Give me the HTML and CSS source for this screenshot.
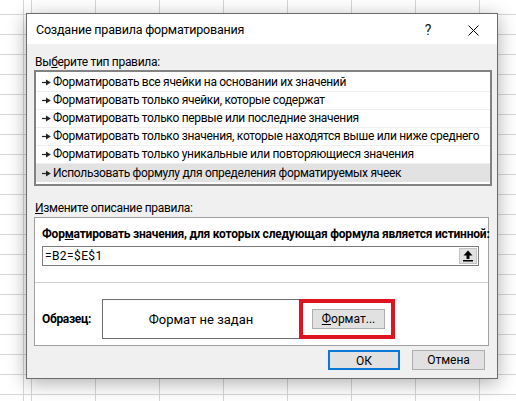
FILE: index.html
```html
<!DOCTYPE html>
<html lang="ru">
<head>
<meta charset="utf-8">
<title>Создание правила форматирования</title>
<link rel="stylesheet" href="styles.css">
</head>
<body>
<div class="dialog">
  <div class="titlebar">
    <span class="title">Создание правила форматирования</span>
    <span class="help">?</span>
    <span class="close"><svg width="11" height="11" viewBox="0 0 11 11"><path d="M0.5 0.5 L10.5 10.5 M10.5 0.5 L0.5 10.5" stroke="#000" stroke-width="1" fill="none"/></svg></span>
  </div>
  <div class="content">
    <div class="label">Вы<u>б</u>ерите тип правила:</div>
    <ul class="rules">
      <li><svg class="arrow" width="9" height="7" viewBox="0 0 9 7"><path d="M0 3.5 H4.5" stroke="#222" stroke-width="1.2"/><path d="M4 0.5 L8.8 3.5 L4 6.5 Z" fill="#222"/></svg>Форматировать все ячейки на основании их значений</li>
      <li><svg class="arrow" width="9" height="7" viewBox="0 0 9 7"><path d="M0 3.5 H4.5" stroke="#222" stroke-width="1.2"/><path d="M4 0.5 L8.8 3.5 L4 6.5 Z" fill="#222"/></svg>Форматировать только ячейки, которые содержат</li>
      <li><svg class="arrow" width="9" height="7" viewBox="0 0 9 7"><path d="M0 3.5 H4.5" stroke="#222" stroke-width="1.2"/><path d="M4 0.5 L8.8 3.5 L4 6.5 Z" fill="#222"/></svg>Форматировать только первые или последние значения</li>
      <li><svg class="arrow" width="9" height="7" viewBox="0 0 9 7"><path d="M0 3.5 H4.5" stroke="#222" stroke-width="1.2"/><path d="M4 0.5 L8.8 3.5 L4 6.5 Z" fill="#222"/></svg>Форматировать только значения, которые находятся выше или ниже среднего</li>
      <li><svg class="arrow" width="9" height="7" viewBox="0 0 9 7"><path d="M0 3.5 H4.5" stroke="#222" stroke-width="1.2"/><path d="M4 0.5 L8.8 3.5 L4 6.5 Z" fill="#222"/></svg>Форматировать только уникальные или повторяющиеся значения</li>
      <li class="selected"><svg class="arrow" width="9" height="7" viewBox="0 0 9 7"><path d="M0 3.5 H4.5" stroke="#222" stroke-width="1.2"/><path d="M4 0.5 L8.8 3.5 L4 6.5 Z" fill="#222"/></svg>Использовать формулу для определения форматируемых ячеек</li>
    </ul>
    <div class="label label2"><u>И</u>змените описание правила:</div>
    <div class="panel">
      <div class="panel-top">
        <div class="bold heading">Фор<u>м</u>атировать значения, для которых следующая формула является истинной:</div>
        <div class="input">
          <span class="formula">=B2=$E$1</span>
          <span class="collapse"><svg width="10" height="12" viewBox="0 0 10 12"><path d="M5 0.5 L9.5 5.5 H6.5 V9 H3.5 V5.5 H0.5 Z" fill="#000"/><rect x="0" y="10" width="10" height="1.5" fill="#000"/></svg></span>
        </div>
      </div>
      <div class="panel-bottom">
        <span class="bold sample-label">Образец:</span>
        <div class="sample">Формат не задан</div>
        <div class="fmt-wrap">
          <button class="btn fmt"><u>Ф</u>ормат...</button>
          <span class="mark"></span>
        </div>
      </div>
    </div>
    <div class="actions">
      <button class="btn ok">ОК</button>
      <button class="btn cancel">Отмена</button>
    </div>
  </div>
</div>
</body>
</html>
```
FILE: styles.css
```css
html, body {
  margin: 0;
  padding: 0;
}
body {
  width: 516px;
  height: 401px;
  overflow: hidden;
  font-family: Roboto, "Noto Sans", sans-serif;
  font-size: 12px;
  color: #000;
  background-color: #fff;
  background-image:
    linear-gradient(to right, transparent 23px, #d6d6d6 23px, #d6d6d6 24px, transparent 24px),
    repeating-linear-gradient(to right, transparent 0 31px, #d6d6d6 31px 32px, transparent 32px 64px),
    repeating-linear-gradient(to bottom, transparent 0 14px, #d6d6d6 14px 15px, transparent 15px 20px);
  padding-top: 13px;
  padding-left: 26px;
  box-sizing: border-box;
}
.dialog {
  width: 472px;
  height: 366px;
  box-sizing: border-box;
  border: 1px solid #6a6a6a;
  background: #f0f0f0;
  box-shadow: 0 4px 18px rgba(0, 0, 0, 0.32);
  display: flex;
  flex-direction: column;
}
.titlebar {
  height: 30px;
  background: #fff;
  display: flex;
  align-items: center;
  padding-left: 9px;
  padding-right: 18px;
}
.title {
  font-size: 12.5px;
  letter-spacing: -0.2px;
  flex: 1;
  line-height: 20px;
  padding-top: 2px;
}
.help {
  font-size: 14px;
  width: 12px;
  text-align: center;
  margin-right: 34px;
  color: #111;
  padding-top: 2px;
}
.close {
  display: flex;
  width: 11px;
  height: 11px;
  margin-top: 2px;
}
.content {
  padding: 10px 5px 0 7px;
  display: flex;
  flex-direction: column;
  flex: 1;
  letter-spacing: -0.3px;
}
.label {
  line-height: 16px;
  height: 16px;
  padding-left: 1px;
}
.rules {
  list-style: none;
  margin: 0;
  padding: 2px 0;
  width: 458px;
  box-sizing: border-box;
  border: 2px solid #828282;
  background: #fff;
}
.rules li {
  height: 18px;
  line-height: 17px;
  box-sizing: border-box;
  border-bottom: 1px solid #efefef;
  display: flex;
  align-items: center;
  padding-left: 6px;
  white-space: nowrap;
}
.rules li:last-child {
  border-bottom: none;
}
.rules li.selected {
  background: #e2e2e2;
}
.arrow {
  flex: none;
  margin-right: 2px;
}
.label2 {
  margin-top: 14px;
}
.panel {
  margin-top: 1px;
  width: 455px;
  box-sizing: border-box;
  border: 1px solid #a0a0a0;
  background: #fff;
}
.panel-top {
  padding: 8px 8px 16px 7px;
  border-bottom: 1px solid #cfcfcf;
}
.bold {
  font-weight: bold;
  line-height: 16px;
  white-space: nowrap;
}
.heading {
  letter-spacing: -0.22px;
}
.input {
  margin-top: 4px;
  height: 20px;
  width: 437px;
  box-sizing: border-box;
  border: 1px solid #7a7a7a;
  display: flex;
  align-items: center;
  justify-content: space-between;
  padding: 0 1px 0 2px;
}
.formula {
  letter-spacing: 0.4px;
}
.collapse {
  width: 18px;
  height: 16px;
  box-sizing: border-box;
  background: #e1e1e1;
  border: 1px solid #c4c4c4;
  display: flex;
  align-items: center;
  justify-content: center;
}
.panel-bottom {
  display: flex;
  align-items: center;
  padding: 16px 0 6px 7px;
}
.sample-label {
  width: 60px;
}
.sample {
  width: 198px;
  height: 40px;
  box-sizing: border-box;
  border: 1px solid #6e6e6e;
  display: flex;
  align-items: center;
  justify-content: center;
  font-size: 13px;
  letter-spacing: 0;
}
.fmt-wrap {
  position: relative;
  margin-left: 12px;
  display: flex;
}
.btn {
  font-family: inherit;
  font-size: 12px;
  color: #000;
  background: #e1e1e1;
  border: 1px solid #adadad;
  height: 20px;
  padding: 0;
  line-height: 18px;
  box-sizing: border-box;
}
.fmt {
  width: 73px;
}
.mark {
  position: absolute;
  left: -13px;
  top: -10px;
  width: 96px;
  height: 40px;
  box-sizing: border-box;
  border: 4px solid #e0141f;
}
.actions {
  margin-top: 4px;
  display: flex;
  justify-content: flex-end;
  gap: 12px;
  padding-right: 7px;
}
.ok {
  width: 72px;
  border: 2px solid #0a78d4;
}
.cancel {
  width: 73px;
}
```
